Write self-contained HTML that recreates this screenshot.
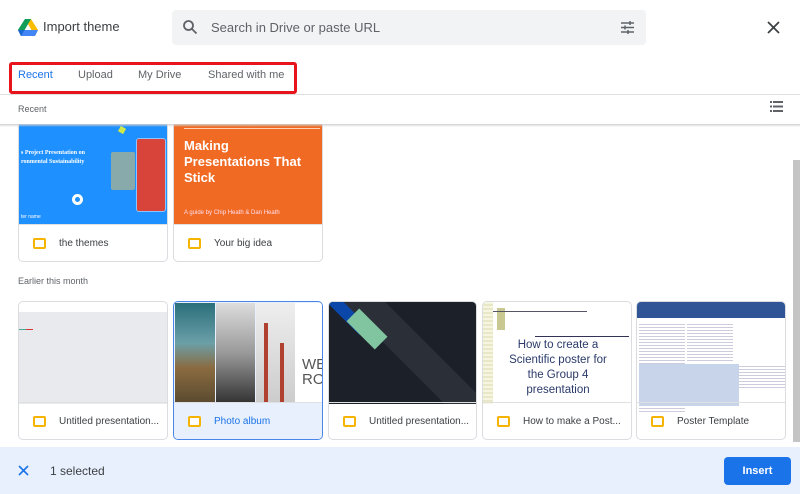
<!DOCTYPE html>
<html><head><style>
*{box-sizing:border-box;margin:0;padding:0}
body{width:800px;height:494px;overflow:hidden;background:#fff;font-family:"Liberation Sans",sans-serif;position:relative;color:#3c4043}
.abs{position:absolute}
.card{position:absolute;border:1px solid #dadce0;border-radius:5px;overflow:hidden;background:#fff}
.foot{position:absolute;left:0;right:0;bottom:0;height:37px;border-top:1px solid #e0e0e0;font-size:10px;color:#3c4043;display:flex;align-items:center}
.ic{width:13px;height:11px;border:2.5px solid #f4b400;border-radius:2px;margin-left:14px;margin-right:13px;background:#fff}
</style></head><body>
<svg class="abs" style="left:18px;top:19px" width="20" height="17" viewBox="0 0 20 17">
<polygon points="7,0 13,0 20,11 17,17" fill="#fbbc04"/>
<polygon points="7,0 13,0 3,17 0,11" fill="#0f9d58"/>
<polygon points="0,11 20,11 17,17 3,17" fill="#4285f4"/>
<polygon points="7,0 10,5 6.5,11 0,11" fill="#0f9d58"/>
<polygon points="0,11 6.5,11 3,17" fill="#1967d2"/>
</svg>
<div class="abs" style="left:43px;top:19px;font-size:13px;color:#3c4043">Import theme</div>
<div class="abs" style="left:172px;top:10px;width:474px;height:35px;background:#f1f3f4;border-radius:4px"></div>
<svg class="abs" style="left:182px;top:19px" width="16" height="16" viewBox="0 0 16 16"><circle cx="6.5" cy="6.5" r="4.5" stroke="#5f6368" stroke-width="1.8" fill="none"/><line x1="10" y1="10" x2="14.5" y2="14.5" stroke="#5f6368" stroke-width="1.8"/></svg>
<div class="abs" style="left:211px;top:20px;font-size:13px;color:#5f6368">Search in Drive or paste URL</div>
<svg class="abs" style="left:620px;top:20px" width="15" height="15" viewBox="0 0 15 15" stroke="#5f6368" stroke-width="1.5"><line x1="1" y1="3" x2="14" y2="3"/><line x1="1" y1="7.5" x2="14" y2="7.5"/><line x1="1" y1="12" x2="14" y2="12"/><line x1="10" y1="1" x2="10" y2="5"/><line x1="5" y1="5.5" x2="5" y2="9.5"/><line x1="8" y1="10" x2="8" y2="14"/></svg>
<svg class="abs" style="left:767px;top:21px" width="13" height="13" viewBox="0 0 13 13" stroke="#3c4043" stroke-width="1.8"><line x1="1" y1="1" x2="12" y2="12"/><line x1="12" y1="1" x2="1" y2="12"/></svg>
<div class="abs" style="left:9px;top:62px;width:288px;height:32px;border:3px solid #e8141b;border-radius:3px"></div>
<div class="abs" style="top:69px;left:18px;font-size:11px;color:#1a73e8">Recent</div>
<div class="abs" style="top:69px;left:78px;font-size:11px;color:#5f6368">Upload</div>
<div class="abs" style="top:69px;left:138px;font-size:11px;color:#5f6368">My Drive</div>
<div class="abs" style="top:69px;left:208px;font-size:11px;color:#5f6368">Shared with me</div>
<div class="abs" style="left:0;top:94px;width:800px;height:1px;background:#e0e0e0"></div>
<div class="abs" style="left:18px;top:104px;font-size:9px;color:#5f6368">Recent</div>
<svg class="abs" style="left:770px;top:101px" width="13" height="11" viewBox="0 0 13 11" fill="#5f6368"><rect x="0" y="0" width="2" height="2"/><rect x="3" y="0" width="10" height="2"/><rect x="0" y="4.5" width="2" height="2"/><rect x="3" y="4.5" width="10" height="2"/><rect x="0" y="9" width="2" height="2"/><rect x="3" y="9" width="10" height="2"/></svg>
<div class="abs" style="left:793px;top:160px;width:7px;height:282px;background:#c4c4c4"></div>
<!-- row1 -->
<div class="card" style="left:18px;top:124px;width:150px;height:138px;border-top:none;border-radius:0 0 5px 5px">
<div style="position:absolute;left:0;top:0;width:150px;height:101px;background:#1e90ff">
<div style="position:absolute;left:2px;top:25px;font:bold 6px 'Liberation Serif',serif;color:#fff;line-height:9px">s Project Presentation on<br>ronmental Sustainability</div>
<div style="position:absolute;left:100px;top:3px;width:6px;height:6px;background:#cde84a;transform:rotate(30deg)"></div>
<div style="position:absolute;left:117px;top:14px;width:30px;height:74px;background:#d9443a;border:1px solid #8fc3ff;border-radius:3px"></div>
<div style="position:absolute;left:92px;top:28px;width:24px;height:38px;background:#8aa;border-radius:2px"></div>
<div style="position:absolute;left:53px;top:70px;width:11px;height:11px;border:3px solid #fff;border-radius:50%"></div>
<div style="position:absolute;left:2px;top:90px;font-size:5px;color:#fff">ter name</div>
</div>
<div class="foot"><div class="ic"></div>the themes</div></div>
<div class="card" style="left:173px;top:124px;width:150px;height:138px;border-top:none;border-radius:0 0 5px 5px">
<div style="position:absolute;left:0;top:0;width:150px;height:101px;background:#f06a23">
<div style="position:absolute;left:10px;top:4px;width:136px;height:1px;background:#fbd0b5"></div>
<div style="position:absolute;left:10px;top:14px;font:bold 13px 'Liberation Sans',sans-serif;color:#fff;line-height:16px">Making<br>Presentations That<br>Stick</div>
<div style="position:absolute;left:10px;top:86px;font-size:6px;color:#fde">A guide by Chip Heath &amp; Dan Heath</div></div>
<div class="foot"><div class="ic"></div>Your big idea</div></div>
<div class="abs" style="left:0;top:124px;width:800px;height:3px;background:linear-gradient(#d0d0d0,rgba(255,255,255,0))"></div>
<div class="abs" style="left:18px;top:276px;font-size:9px;color:#5f6368">Earlier this month</div>
<!-- row2 -->
<div class="card" style="left:18px;top:301px;width:150px;height:139px">
<div style="position:absolute;left:0;top:10px;width:150px;height:92px;background:#e8eaed"></div>
<div style="position:absolute;left:0;top:27px;width:7px;height:1px;background:#4a9"></div>
<div style="position:absolute;left:7px;top:27px;width:7px;height:1px;background:#d33"></div>
<div class="foot"><div class="ic"></div>Untitled presentation...</div></div>
<div class="card" style="left:173px;top:301px;width:150px;height:139px;border-color:#4a86e8;background:#e8f0fe">
<div style="position:absolute;left:1px;top:1px;width:40px;height:100px;background:linear-gradient(#2a6f7a,#6b9fa8 40%,#8a6b40 65%,#5a4a30)"></div>
<div style="position:absolute;left:42px;top:1px;width:39px;height:100px;background:linear-gradient(#ddd,#999 50%,#333)"></div>
<div style="position:absolute;left:82px;top:1px;width:39px;height:100px;background:linear-gradient(#eee,#ccc);"><div style="position:absolute;left:8px;top:20px;width:4px;height:80px;background:#b04030"></div><div style="position:absolute;left:24px;top:40px;width:4px;height:60px;background:#b04030"></div></div>
<div style="position:absolute;left:121px;top:1px;width:28px;height:100px;background:#fff"></div>
<div style="position:absolute;left:128px;top:55px;font:15px 'Liberation Sans Narrow','Liberation Sans',sans-serif;color:#555;line-height:15px">WES<br>ROA</div>
<div class="foot" style="color:#1a73e8;background:#e8f0fe"><div class="ic"></div>Photo album</div></div>
<div class="card" style="left:328px;top:301px;width:149px;height:139px">
<div style="position:absolute;left:0;top:0;width:149px;height:102px;background:#1c2029;overflow:hidden">
<div style="position:absolute;left:-20px;top:30px;width:200px;height:30px;background:#2a2f38;transform:rotate(45deg)"></div>
<div style="position:absolute;left:-8px;top:5px;width:50px;height:12px;background:#0b47a8;transform:rotate(45deg)"></div>
<div style="position:absolute;left:18px;top:18px;width:40px;height:18px;background:#80c4a0;transform:rotate(45deg)"></div></div>
<div class="foot"><div class="ic"></div>Untitled presentation...</div></div>
<div class="card" style="left:482px;top:301px;width:150px;height:139px">
<div style="position:absolute;left:0;top:0;width:10px;height:102px;background:repeating-linear-gradient(#f5f5e0 0 2px,#e8e8c8 2px 4px)"></div>
<div style="position:absolute;left:14px;top:6px;width:8px;height:22px;background:#c8c890"></div>
<div style="position:absolute;left:10px;top:9px;width:94px;height:1px;background:#556"></div>
<div style="position:absolute;left:52px;top:34px;width:94px;height:1px;background:#335"></div>
<div style="position:absolute;left:0;top:36px;width:150px;text-align:center;font-size:11.5px;line-height:15px;color:#2b3a6a">How to create a<br>Scientific poster for<br>the Group 4<br>presentation</div>
<div class="foot"><div class="ic"></div>How to make a Post...</div></div>
<div class="card" style="left:636px;top:301px;width:150px;height:139px">
<div style="position:absolute;left:0;top:0;width:150px;height:16px;background:#2f5597"></div>
<div style="position:absolute;left:2px;top:20px;width:46px;height:90px;background:repeating-linear-gradient(#fff 0 2px,#ccd 2px 3px)"></div>
<div style="position:absolute;left:50px;top:20px;width:46px;height:40px;background:repeating-linear-gradient(#fff 0 2px,#ccd 2px 3px)"></div>
<div style="position:absolute;left:2px;top:62px;width:100px;height:42px;background:#c8d4ea"></div>
<div style="position:absolute;left:102px;top:62px;width:46px;height:25px;background:repeating-linear-gradient(#fff 0 2px,#ccd 2px 3px)"></div>
<div class="foot"><div class="ic"></div>Poster Template</div></div>
<!-- bottom -->
<div class="abs" style="left:0;top:447px;width:800px;height:47px;background:#e8f0fe"></div>
<svg class="abs" style="left:18px;top:465px" width="11" height="11" viewBox="0 0 11 11" stroke="#1a73e8" stroke-width="1.6"><line x1="1" y1="1" x2="10" y2="10"/><line x1="10" y1="1" x2="1" y2="10"/></svg>
<div class="abs" style="left:50px;top:464px;font-size:12px;color:#3c4043">1 selected</div>
<div class="abs" style="left:724px;top:457px;width:67px;height:28px;background:#1a73e8;border-radius:4px;color:#fff;font-size:11px;font-weight:bold;text-align:center;line-height:28px">Insert</div>
</body></html>
